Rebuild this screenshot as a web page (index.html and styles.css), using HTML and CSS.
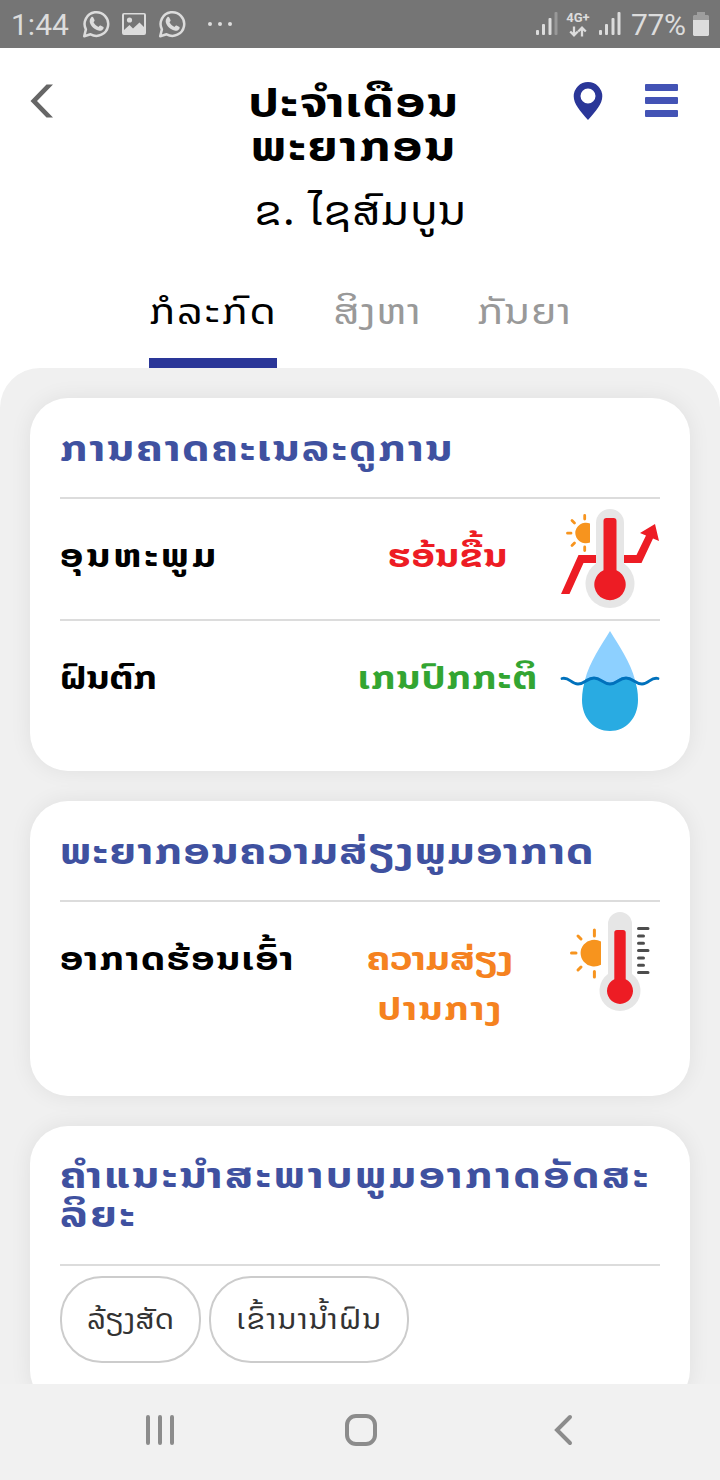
FILE: index.html
```html
<!DOCTYPE html>
<html lang="lo">
<head>
<meta charset="utf-8">
<title>ພະຍາກອນ</title>
<link rel="stylesheet" href="styles.css">
</head>
<body>
<svg class="defs" width="0" height="0">
  <symbol id="chat" viewBox="0 0 28 30">
    <path d="M2.2 27.2 3.9 20.4A11.8 11.8 0 1 1 8.6 25.3Z" fill="none" stroke="currentColor" stroke-width="2.5" stroke-linejoin="round"/>
    <path d="M9.3 8.2c.6-.6 1.6-.5 2 .3l1.2 2.6c.3.7-.1 1.2-1 2.2 1.200 2.300 2.700 3.700 5 4.700.900-1.100 1.400-1.700 2.100-1.400l2.400 1.200c.8.4.8 1 .4 1.900-.8 1.700-2.800 2.400-4.900 1.800-4.300-1.200-7.500-4.300-8.600-7.800-.6-2 .1-4.200 1.400-5.500Z" fill="currentColor"/>
  </symbol>
</svg>
<header class="status">
  <span class="clock">1:44</span>
  <svg class="chat" width="28" height="30"><use href="#chat"/></svg>
  <svg class="photo" width="24" height="22" viewBox="0 0 24 22"><path fill="currentColor" fill-rule="evenodd" d="M2 0H22A2 2 0 0 1 24 2V20A2 2 0 0 1 22 22H2A2 2 0 0 1 0 20V2A2 2 0 0 1 2 0ZM2 1.500V17L7.500 12 11 15.500 17.500 9.500 22 14V1.500Z"/><circle cx="7.500" cy="7" r="2.600" fill="currentColor"/></svg>
  <svg class="chat" width="28" height="30"><use href="#chat"/></svg>
  <svg class="dots" width="26" height="6" viewBox="0 0 26 6" fill="currentColor"><circle cx="3" cy="3" r="2"/><circle cx="13" cy="3" r="2"/><circle cx="23" cy="3" r="2"/></svg>
  <div class="right">
    <svg width="22" height="24" viewBox="0 0 22 24" fill="currentColor"><rect y="18" width="3" height="5" rx="1"/><rect x="6" y="12" width="3" height="11" rx="1"/><rect x="12.500" y="6" width="3" height="17" rx="1"/><rect x="18.500" width="3" height="23" rx="1" opacity=".35"/></svg>
    <div class="net"><span>4G+</span><svg width="18" height="11" viewBox="0 0 18 11" fill="none" stroke="currentColor" stroke-width="2.300"><path d="M5 .5V9M1.200 5.500 5 9.300 8.800 5.500M13 10.500V2M9.200 5.500 13 1.700 16.800 5.500"/></svg></div>
    <svg class="sig2" width="22" height="24" viewBox="0 0 22 24" fill="currentColor"><rect y="18" width="3" height="5" rx="1"/><rect x="6" y="12" width="3" height="11" rx="1"/><rect x="12.500" y="6" width="3" height="17" rx="1"/><rect x="18.500" width="3" height="23" rx="1"/></svg>
    <span class="pct">77%</span>
    <svg width="16" height="24" viewBox="0 0 16 24" fill="currentColor"><path opacity=".4" d="M4 0H12V3H15L16 4V8H0V4L1 3H4Z"/><path d="M0 8H16V23L15 24H1L0 23Z"/></svg>
  </div>
</header>
<section class="head">
  <svg class="back" width="24" height="34" viewBox="0 0 24 34"><path d="M16.500 0.500H23L7 17 23 33.500H16.500L.5 17Z" fill="#666"/></svg>
  <div class="heading">
    <h1><span class="t1">ປະຈຳເດືອນ</span><br><span class="t2">ພະຍາກອນ</span></h1>
    <p class="place"><span class="t3">ຂ. ໄຊສົມບູນ</span></p>
  </div>
  <div class="actions">
    <svg width="30" height="40" viewBox="0 0 30 40"><path fill="#2a3698" fill-rule="evenodd" d="M15 1A14.300 14.300 0 0 1 29.300 15.300C29.300 23 23 30 15 39 7 30 .7 23 .7 15.300A14.300 14.300 0 0 1 15 1ZM15 7.500A7.500 7.500 0 1 0 15 22.500 7.500 7.500 0 0 0 15 7.500Z"/></svg>
    <svg class="menu" width="34" height="34" viewBox="0 0 34 34" fill="#4353b5"><rect width="33" height="7" rx="1"/><rect y="13" width="33" height="7" rx="1"/><rect y="26" width="33" height="7" rx="1"/></svg>
  </div>
</section>
<nav class="tabs">
  <div class="tab active"><span class="t4">ກໍລະກົດ</span></div>
  <div class="tab tb2"><span class="t5">ສິງຫາ</span></div>
  <div class="tab tb3"><span class="t6">ກັນຍາ</span></div>
</nav>
<main class="panel">
  <section class="card">
    <h2><span class="t7">ການຄາດຄະເນລະດູການ</span></h2>
    <div class="row">
      <div class="name"><span class="t8">ອຸນຫະພູມ</span></div>
      <div class="value red"><span class="t9">ຮອ້ນຂື້ນ</span></div>
      <svg width="100" height="100" viewBox="0 0 100 100">
        <path d="M24.700 6.500V10M24.700 38V41.500M7.500 24.200H11M12 11.500 14.500 14M12 36.500 14.500 34" fill="none" stroke="#f7941e" stroke-width="2.800" stroke-linecap="round"/>
        <path d="M30 14.500A10.800 10.200 0 1 0 30 33.500Z" fill="#f7941e"/>
        <path d="M1 85 18.500 46H36V54H23.500L9.500 85ZM64 46H76.500L86 26.500 80 24 95 15 99 32 93 29.500 81.500 54H64Z" fill="#ed1c24"/>
        <path d="M36 14A14 14 0 0 1 64 14V54.500A24.500 24.500 0 1 1 36 54.500Z" fill="#e6e6e6"/>
        <path d="M43.500 12Q43.500 9 46.500 9H53.500Q56.500 9 56.500 12V61.200A15.700 15.700 0 1 1 43.500 61.200Z" fill="#ed1c24"/>
      </svg>
    </div>
    <div class="row">
      <div class="name"><span class="t10">ຝົນຕົກ</span></div>
      <div class="value green"><span class="t11">ເກນປົກກະຕິ</span></div>
      <svg width="100" height="100" viewBox="0 0 100 100">
        <path d="M50 0C58 13 71 32 75 49V53H25V49C29 32 42 13 50 0Z" fill="#8dd0ff"/>
        <path d="M25.500 48C31 46 39 46 44 50 49 53 53 52 57 49 62 45 69 45 74.500 49 77 55 78 61 78 69 78 87 66 100 50 100S22 87 22 69C22 61 23.500 54 25.500 48Z" fill="#29abe2"/>
        <path d="M2 47.500C9 45.500 11 53 18 53S27 47 34 47 43 53 50 53 59 47 66 47 75 53 82 53 91 45.500 98 47.500" fill="none" stroke="#0071bc" stroke-width="2.800" stroke-linecap="round"/>
      </svg>
    </div>
  </section>
  <section class="card second">
    <h2><span class="t12">ພະຍາກອນຄວາມສ່ຽງພູມອາກາດ</span></h2>
    <div class="row">
      <div class="name"><span class="t13">ອາກາດຮ້ອນເອົ້າ</span></div>
      <div class="value orange"><span class="t14">ຄວາມສ່ຽງ</span><br><span class="t15">ປານກາງ</span></div>
      <svg width="100" height="100" viewBox="0 0 100 100">
        <path d="M34.400 18V24M34.400 59.500V65M11.500 41H16M18 24 21 27M18 58 21 55" fill="none" stroke="#f7941e" stroke-width="3" stroke-linecap="round"/>
        <path d="M41 29.500A13.600 13.400 0 1 0 41 52.700Z" fill="#f7941e"/>
        <path d="M48 12A12 12 0 0 1 72 12V62A20.500 20.500 0 1 1 48 62Z" fill="#e6e6e6"/>
        <path d="M54.300 20.500Q54.300 18 57 18H63Q65.700 18 65.700 20.500V67.200A13 13 0 1 1 54.300 67.200Z" fill="#ed1c24"/>
        <path d="M78.500 16.500H88M78.500 24H83.500M78.500 31.300H83.500M78.500 38.500H88M78.500 46H83.500M78.500 53.200H83.500M78.500 60.500H88" stroke="#4d4d4d" stroke-width="3" stroke-linecap="round"/>
      </svg>
    </div>
  </section>
  <section class="card third">
    <h2><span class="t16">ຄຳແນະນຳສະພາບພູມອາກາດອັດສະ</span><br><span class="t17">ລິຍະ</span></h2>
    <div class="chips">
      <div class="chip c1"><span class="t18">ລ້ຽງສັດ</span></div>
      <div class="chip c2"><span class="t19">ເຂົ້ານານ້ຳຝົນ</span></div>
    </div>
  </section>
</main>
<footer class="navbar">
  <svg width="30" height="32" viewBox="0 0 30 32" stroke="#8c8c8c" stroke-width="4" stroke-linecap="round"><path d="M3 3V29M15 3V29M27 3V29"/></svg>
  <svg width="32" height="34" viewBox="0 0 32 34"><rect x="2" y="3" width="28" height="28" rx="9" fill="none" stroke="#8c8c8c" stroke-width="4"/></svg>
  <svg width="20" height="32" viewBox="0 0 20 32"><path d="M17 3 4 16 17 29" fill="none" stroke="#8c8c8c" stroke-width="4" stroke-linecap="round"/></svg>
</footer>
</body>
</html>
```
FILE: styles.css
```css
* { box-sizing: border-box; margin: 0; padding: 0; }
body { width: 720px; height: 1480px; overflow: hidden; background: #fff; color: #000; font-family: "Noto Sans Lao", "DejaVu Sans", sans-serif; display: flex; flex-direction: column; }
svg { display: block; flex: none; }
.defs { height: 0; }
span { display: inline-block; white-space: nowrap; }
.status { height: 48px; flex: none; background: #757575; color: #dcdcdc; display: flex; align-items: center; padding: 0 11px 0 11px; font-family: Roboto, sans-serif; }
.clock { width: 71px; font-size: 30px; }
.photo { margin: 0 12px; }
.dots { margin-left: 21px; }
.right { margin-left: auto; display: flex; align-items: center; }
.net { width: 26px; margin: 0 8px 0 7px; font-size: 13px; line-height: 12px; font-weight: 700; display: flex; flex-direction: column; align-items: center; gap: 2px; }
.pct { font-size: 30px; margin: 0 7px 0 10px; width: 55px; letter-spacing: -.3px; }
.head { height: 234px; flex: none; display: grid; grid-template-columns: 203px 300px 217px; }
.back { margin: 36px 0 0 30px; }
.heading { text-align: center; padding-top: 32px; }
h1 { font-size: 41px; line-height: 44px; font-weight: 700; }
h1 span, h2 span, .row span { transform: scaleX(1.2); }
h2 span, .name span { transform-origin: left; }
.place { font-size: 41px; line-height: 50px; margin-top: 17px; padding-left: 14px; }
.place span { transform: scaleX(1.1); }
.tab span { transform: scaleX(1.15); }
.chip span { transform: scaleX(1.05); }
.heading h1 { padding-left: 1px; }
.t1 { letter-spacing: 1.5px; margin-right: -1.5px; }
.t2 { letter-spacing: 1.7px; margin-right: -1.7px; }
.t3 { letter-spacing: .7px; margin-right: -.7px; }
.t4 { letter-spacing: 1.7px; margin-right: -1.7px; }
.t5 { letter-spacing: .7px; margin-right: -.7px; }
.t6 { letter-spacing: 1px; margin-right: -1px; }
.t7 { letter-spacing: 1.8px; }
.t8 { letter-spacing: 2.6px; }
.t9 { letter-spacing: .5px; margin-right: -.5px; }
.row .t10 { transform: scaleX(1.16); }
.t11 { letter-spacing: 1px; margin-right: -1px; }
.t12 { letter-spacing: 1.35px; }
.t13 { letter-spacing: 1.4px; }
.t14 { letter-spacing: .1px; }
.t15 { letter-spacing: 1.5px; margin-right: -1.5px; }
.t16, .t17 { letter-spacing: 2.3px; }
.t18 { letter-spacing: .2px; }
.t19 { letter-spacing: 1.3px; margin-right: -1.3px; }
.actions { display: flex; padding: 33px 0 0 70px; gap: 42px; }
.menu { margin-top: 3px; }
.tabs { height: 86px; flex: none; display: flex; padding-left: 149px; font-size: 36px; line-height: 59px; }
.tab { width: 128px; height: 86px; text-align: center; color: #999; }
.active { color: #000; border-bottom: 10px solid #2a3698; }
.tb2 { margin-left: 36px; }
.tb3 { margin-left: 19px; }
.panel { height: 1016px; flex: none; overflow: hidden; background: #f0f0f0; border-radius: 40px 40px 0 0; padding: 30px; display: flex; flex-direction: column; gap: 30px; }
.card { height: 373px; flex: none; background: #fff; border-radius: 38px; padding: 30px; box-shadow: 0 0 22px rgba(0,0,0,.07); }
.second { height: 295px; }
.third { height: 282px; }
h2 { height: 69px; color: #3f51a0; font-size: 36px; line-height: 40px; font-weight: 700; }
.third h2 { height: 108px; line-height: 39px; }
.row { height: 122px; border-top: 2px solid #dcdcdc; padding-top: 10px; display: grid; grid-template-columns: 276px 224px 100px; font-size: 32px; line-height: 50px; font-weight: 700; }
.name { padding-top: 22px; }
.value { padding-top: 22px; text-align: center; }
.red { color: #ed1c24; }
.green { color: #33a532; }
.orange { color: #f58220; padding-right: 16px; }
.chips { border-top: 2px solid #dcdcdc; padding-top: 10px; display: flex; gap: 8px; color: #333; font-size: 29px; line-height: 82px; text-align: center; }
.chip { height: 87px; border: 2px solid #ccc; border-radius: 42px; }
.c1 { width: 141px; }
.c2 { width: 200px; }
.navbar { height: 96px; flex: none; background: #f1f1f1; display: flex; align-items: center; justify-content: space-between; padding: 0 147px 4px 145px; }
.navbar svg:nth-child(2) { margin-right: 6px; }
```
